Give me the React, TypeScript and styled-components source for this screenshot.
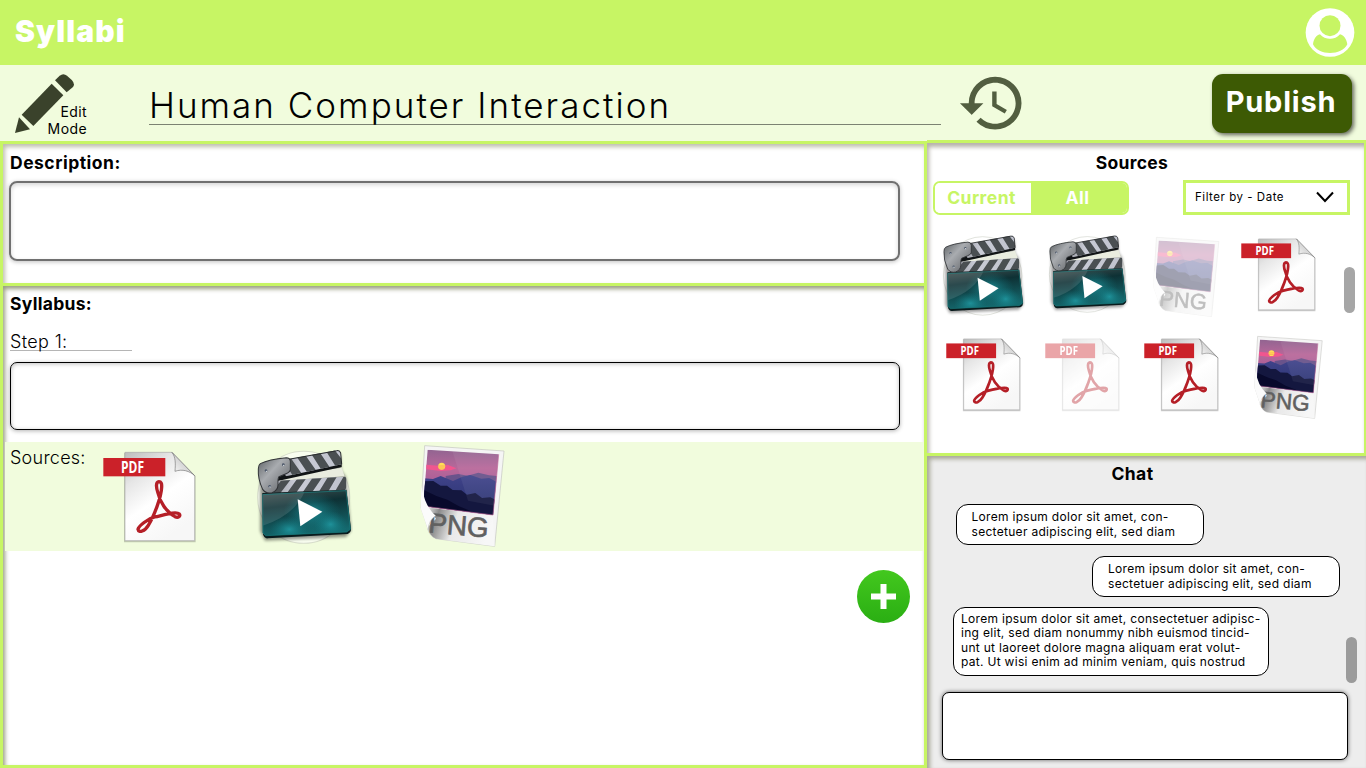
import React from "react";
import styled, { createGlobalStyle } from "styled-components";

const lime = "#c7f564";
const mint = "#f1fcdd";

const GlobalStyle = createGlobalStyle`
  * { box-sizing: border-box; }
  html, body { margin: 0; padding: 0; }
  body {
    width: 1366px;
    height: 768px;
    overflow: hidden;
    background: #fff;
    color: #000;
    font-family: Inter, "Liberation Sans", sans-serif;
  }
  svg { display: block; flex: none; }
`;

const Page = styled.div`
  display: flex;
  flex-direction: column;
  width: 1366px;
  height: 768px;
`;

const Header = styled.header`
  display: flex;
  justify-content: space-between;
  height: 65px;
  padding: 8px 11px 0 15px;
  background: ${lime};
`;

const Logo = styled.div`
  font-size: 30px;
  line-height: 36px;
  margin-top: 5px;
  font-weight: 900;
  letter-spacing: 1.1px;
  color: #fff;
`;

const Toolbar = styled.div`
  display: flex;
  align-items: flex-start;
  height: 76px;
  background: ${mint};
`;

const EditMode = styled.div`
  display: flex;
  width: 149px;
  padding: 8px 0 0 14px;
`;

const EditLabel = styled.div`
  width: 73px;
  margin: 30px 0 0 -61px;
  text-align: right;
  font-size: 14px;
  line-height: 17px;
  letter-spacing: 0.4px;
`;

const CourseTitle = styled.div`
  width: 792px;
  height: 60px;
  padding-top: 19px;
  border-bottom: 1px solid #7c8272;
  font-size: 35px;
  line-height: 42px;
  font-weight: 300;
  letter-spacing: 2.02px;
  white-space: nowrap;
`;

const HistoryButton = styled.div`
  margin: 3px 0 0 16px;
  width: 255px;
`;

const PublishButton = styled.button`
  width: 140px;
  height: 59px;
  margin: 9px 0 0 0;
  padding: 0 0 4px;
  border: 0;
  border-radius: 11px;
  background: #3d5a04;
  box-shadow: 2px 2px 4px rgba(0, 0, 0, 0.6);
  color: #fff;
  font: 700 29px/36px Inter, sans-serif;
  letter-spacing: 0.8px;
  text-indent: -2px;
`;

const Main = styled.main`
  display: grid;
  grid-template-columns: 927px 439px;
  height: 627px;
`;

const Column = styled.div`
  display: flex;
  flex-direction: column;
  height: 627px;
`;

const DescriptionPanel = styled.section`
  height: 145px;
  padding: 9px 0 0 6px;
  border: 3px solid ${lime};
  box-shadow: inset 2px 3px 4px rgba(70, 70, 20, 0.35);
`;

const SyllabusPanel = styled.section`
  position: relative;
  flex: 1;
  border: 3px solid ${lime};
  border-top: 0;
  box-shadow: inset 2px 3px 4px rgba(50, 60, 0, 0.5);
`;

const Heading = styled.h2<{ $spacing?: number; $indent?: number }>`
  margin: 0;
  padding-left: ${(p) => p.$indent ?? 0}px;
  font-size: 17.5px;
  line-height: 20px;
  font-weight: 700;
  letter-spacing: ${(p) => p.$spacing ?? 0.2}px;
`;

const DescriptionField = styled.div`
  width: 891px;
  height: 80px;
  margin-top: 8px;
  border: 2px solid #707070;
  border-radius: 8px;
  box-shadow: 0 1px 4px rgba(0, 0, 0, 0.25), inset 0 2px 4px rgba(0, 0, 0, 0.16);
`;

const StepName = styled.div`
  width: 122px;
  height: 20px;
  margin: 17px 0 11px 7px;
  border-bottom: 1px solid #b5b5b5;
  font-size: 18px;
  line-height: 22px;
  font-weight: 300;
  letter-spacing: 0.35px;
`;

const StepField = styled.div`
  width: 890px;
  height: 68px;
  margin-left: 7px;
  border: 1px solid #000;
  border-radius: 7px;
  box-shadow: 0 1px 4px rgba(0, 0, 0, 0.3), inset 0 1px 4px rgba(0, 0, 0, 0.25);
`;

const SyllabusTitle = styled.div`
  padding: 8px 0 0 7px;
`;

const StepSources = styled.div`
  display: flex;
  align-items: flex-start;
  height: 109px;
  margin: 12px 0 0 2px;
  background: ${mint};
`;

const SourcesLabel = styled.div`
  width: 98px;
  padding: 5px 0 0 5px;
  font-size: 18px;
  line-height: 22px;
  font-weight: 300;
  letter-spacing: 0.25px;
`;

const SourceItem = styled.div<{ $left?: number; $top?: number; $faded?: boolean }>`
  flex: none;
  margin-left: ${(p) => p.$left ?? 0}px;
  margin-top: ${(p) => p.$top ?? 0}px;
  opacity: ${(p) => (p.$faded ? 0.4 : 1)};
`;

const AddRow = styled.div`
  display: flex;
  justify-content: flex-end;
  padding: 19px 14px 0 0;
`;

const SourcesPanel = styled.section`
  position: relative;
  height: 316px;
  margin-top: -1px;
  border: 3px solid ${lime};
  border-left: 0;
  border-right-width: 2px;
  box-shadow: inset 2px 4px 4px rgba(60, 50, 30, 0.38);
`;

const CenteredTitle = styled.div<{ $top: number; $right?: number }>`
  padding: ${(p) => p.$top}px ${(p) => p.$right ?? 27}px 0 0;
  text-align: center;
`;

const Controls = styled.div`
  display: flex;
  justify-content: space-between;
  padding: 7px 14px 0 6px;
`;

const Tabs = styled.div`
  display: flex;
  width: 196px;
  height: 34px;
  margin-top: 1px;
  border: 2px solid ${lime};
  border-radius: 7px;
  overflow: hidden;
`;

const Tab = styled.div<{ $active?: boolean }>`
  width: 96px;
  flex: none;
  padding-right: 3px;
  text-align: center;
  font-size: 17.5px;
  line-height: 30px;
  font-weight: 700;
  letter-spacing: 0.45px;
  color: ${(p) => (p.$active ? "#fff" : lime)};
  background: ${(p) => (p.$active ? lime : "#fff")};
`;

const Filter = styled.div`
  display: flex;
  align-items: center;
  justify-content: space-between;
  width: 167px;
  height: 35px;
  padding: 0 13px 1px 9px;
  border: 3px solid ${lime};
  font-size: 11.5px;
  letter-spacing: 0.53px;
`;

const SourceRow = styled.div<{ $top: number }>`
  display: flex;
  align-items: flex-start;
  height: 100px;
  margin-top: ${(p) => p.$top}px;
`;

const ScrollThumb = styled.div<{ $top: number; $right: number; $color: string }>`
  position: absolute;
  top: ${(p) => p.$top}px;
  right: ${(p) => p.$right}px;
  width: 11px;
  height: 46px;
  border-radius: 6px;
  background: ${(p) => p.$color};
`;

const ChatPanel = styled.section`
  position: relative;
  flex: 1;
  background: #ededed;
  box-shadow: inset 3px 3px 4px rgba(70, 70, 30, 0.42);
`;

const Messages = styled.div`
  display: flex;
  flex-direction: column;
  height: 188px;
  margin-top: 20px;
`;

const Bubble = styled.div<{ $left: number; $w: number; $h: number; $pad: string; $line: number; $gap?: number }>`
  width: ${(p) => p.$w}px;
  height: ${(p) => p.$h}px;
  margin: ${(p) => p.$gap ?? 0}px 0 0 ${(p) => p.$left}px;
  padding: ${(p) => p.$pad};
  border: 1px solid #000;
  border-radius: 12px;
  background: #fff;
  font-size: 12px;
  line-height: ${(p) => p.$line}px;
  letter-spacing: 0.3px;
  white-space: nowrap;
`;

const ChatInput = styled.div`
  width: 406px;
  height: 68px;
  margin-left: 15px;
  border: 1px solid #000;
  border-radius: 7px;
  background: #fff;
  box-shadow: 0 0 4px rgba(0, 0, 0, 0.6);
`;

const Avatar = () => (
  <svg width="50" height="50" viewBox="0 0 150 150">
    <circle cx="75" cy="73.5" r="73" fill="#fff" />
    <path d="M24 109C26 94 33 82 45 79C60 97 90 97 105 79C117 82 125 94 127 109C111 144 39 144 24 109Z" fill={lime} />
    <circle cx="75" cy="53" r="38" fill="#fff" />
    <circle cx="75" cy="53" r="31.5" fill={lime} />
  </svg>
);

const Pencil = () => (
  <svg width="61" height="61" viewBox="42 219 183 183" fill="#3a422b">
    <path d="M155 251L190 286L100 378L65 344Z" />
    <path d="M165 241L179 227Q190 218 201 227L216 241Q226 252 219 261L200 277Z" />
    <path d="M57 352L90 388L45 399Z" />
  </svg>
);

const History = () => (
  <svg width="70.4" height="70.4" viewBox="0 0 24 24" fill="#525e40">
    <path d="M13 3a9 9 0 0 0-9 9H1l3.89 3.89.07.14L9 12H6c0-3.87 3.13-7 7-7s7 3.13 7 7-3.13 7-7 7c-1.93 0-3.68-.79-4.94-2.06l-1.42 1.42A8.954 8.954 0 0 0 13 21a9 9 0 0 0 0-18zm-1 5v5l4.28 2.54.72-1.21-3.5-2.08V8H12z" />
  </svg>
);

const Chevron = () => (
  <svg width="18" height="12" viewBox="0 0 18 12" fill="none" stroke="#000" strokeWidth="2">
    <path d="M1 1.5L9 10L17 1.5" />
  </svg>
);

const AddIcon = () => (
  <svg width="53" height="53" viewBox="0 0 53 53">
    <defs>
      <linearGradient id="add" x1="0" y1="0" x2="0" y2="1">
        <stop offset="0" stopColor="#43c81e" />
        <stop offset="1" stopColor="#2aae13" />
      </linearGradient>
    </defs>
    <circle cx="26.5" cy="26.5" r="26.5" fill="url(#add)" />
    <path d="M23.5 14H29.5V23.5H39V29.5H29.5V39H23.5V29.5H14V23.5H23.5Z" fill="#fff" />
  </svg>
);

const PdfIcon = ({ size = 93.3 }: { size?: number }) => {
  const id = React.useId();
  return (
    <svg width={size} height={size} viewBox="39 30 280 280">
      <defs>
        <linearGradient id={id + "p"} x1="0" y1="0" x2="0.55" y2="1">
          <stop offset="0" stopColor="#bcbcbc" />
          <stop offset="0.3" stopColor="#e6e6e6" />
          <stop offset="0.6" stopColor="#fff" />
          <stop offset="1" stopColor="#f7f7f7" />
        </linearGradient>
        <linearGradient id={id + "f"} x1="0" y1="1" x2="1" y2="0">
          <stop offset="0" stopColor="#fff" />
          <stop offset="0.5" stopColor="#d5d5d5" />
          <stop offset="1" stopColor="#8b8b8b" />
        </linearGradient>
      </defs>
      <path d="M102 38H247L317 109V307H102Z" fill="#000" opacity="0.2" />
      <path d="M105 37H246L314 107V302H105Z" fill={`url(#${id}p)`} stroke="#aaa" strokeWidth="2" />
      <path d="M246 37C257 51 257 71 255 94C277 86 299 93 314 107Z" fill={`url(#${id}f)`} stroke="#777" strokeWidth="2" />
      <rect x="40" y="54" width="186" height="55" fill="#cb2129" />
      <text x="93" y="98" fill="#fff" fontFamily="Open Sans, sans-serif" fontWeight="700" fontSize="47" textLength="69" lengthAdjust="spacingAndGlyphs">PDF</text>
      <path
        d="M207 125C197 126 198 142 204 159C209 184 229 216 255 230C265 235 273 228 268 222C259 213 222 225 194 231C174 236 146 258 144 268C146 281 165 273 175 256C192 229 214 171 215 142C216 130 213 125 207 125Z"
        fill="none"
        stroke="#b51f27"
        strokeWidth="10"
        strokeLinejoin="round"
      />
    </svg>
  );
};

const MovieIcon = ({ size = 96.7 }: { size?: number }) => {
  const id = React.useId();
  return (
    <svg width={size} height={(size * 295) / 290} viewBox="500 20 290 295">
      <defs>
        <linearGradient id={id + "b"} x1="0" y1="0" x2="0.25" y2="1">
          <stop offset="0" stopColor="#4a5453" />
          <stop offset="0.4" stopColor="#0e3135" />
          <stop offset="1" stopColor="#14696e" />
        </linearGradient>
        <radialGradient id={id + "g"}>
          <stop offset="0" stopColor="#23a6b0" stopOpacity="0.7" />
          <stop offset="1" stopColor="#118088" stopOpacity="0" />
        </radialGradient>
        <linearGradient id={id + "m"} x1="0" y1="0" x2="1" y2="1">
          <stop offset="0" stopColor="#5d6164" />
          <stop offset="0.4" stopColor="#a9acb0" />
          <stop offset="1" stopColor="#55585c" />
        </linearGradient>
        <linearGradient id={id + "s"} x1="0" y1="0" x2="1" y2="0">
          <stop offset="0" stopColor="#85878d" />
          <stop offset="0.4" stopColor="#c9cbd6" />
          <stop offset="1" stopColor="#bfc2cd" />
        </linearGradient>
        <clipPath id={id + "t"}><path d="M565 63L742 30Q751 29 754 38L757 72L590 108Z" /></clipPath>
        <clipPath id={id + "l"}><path d="M558 122L766 109Q771 110 771 116V151L520 160L535 150Z" /></clipPath>
        <clipPath id={id + "c"}><path d="M519 161L771 149L784 267L772 275L529 286L520 278Z" /></clipPath>
        <filter id={id + "h"} x="-20%" y="-20%" width="140%" height="150%"><feGaussianBlur stdDeviation="5" /></filter>
      </defs>
      <circle cx="643" cy="171" r="138" fill="#fff" fillOpacity="0.55" stroke="#c4c8bd" strokeOpacity="0.6" strokeWidth="3" />
      <path d="M512 75L754 43L756 90L770 110L786 270L770 290L527 301L512 272Z" fill="#000" opacity="0.4" filter={`url(#${id}h)`} />
      <path d="M566 122L766 108L757 82L600 104Z" fill="#e9ecdf" />
      <path d="M570 100L757 62V80L565 122Z" fill="#111416" />
      <g clipPath={`url(#${id}t)`}>
        <path d="M550 20H765V130H550Z" fill={`url(#${id}s)`} />
        <path d="M578 52L602 50L640 104L612 109ZM620 46L646 42L682 93L655 98ZM664 38L690 34L724 85L697 90ZM708 29L732 24L770 73L740 80Z" fill="#4a4f52" />
      </g>
      <path d="M569 62L742 31Q751 29 754 38L757 72" fill="none" stroke="#292c2e" strokeWidth="3" />
      <g clipPath={`url(#${id}l)`}>
        <path d="M510 100H780V170H510Z" fill={`url(#${id}s)`} />
        <path d="M540 165L582 112H608L568 165ZM588 165L628 109H654L615 165ZM634 165L674 106H702L662 165ZM682 165L720 103H746L710 165ZM730 165L765 105H792L758 165Z" fill="#4a4f52" />
      </g>
      <path d="M519 158L771 148L785 265Q786 276 775 281L535 294Q525 295 521 282Z" fill="#091b1d" />
      <g clipPath={`url(#${id}c)`}>
        <path d="M510 145H790V290H510Z" fill={`url(#${id}b)`} />
        <ellipse cx="668" cy="214" rx="85" ry="60" fill={`url(#${id}g)`} />
        <ellipse cx="600" cy="267" rx="58" ry="39" fill={`url(#${id}g)`} />
        <ellipse cx="724" cy="252" rx="50" ry="40" fill={`url(#${id}g)`} />
        <path d="M520 155L648 150Q616 226 520 256Z" fill="#fff" opacity="0.12" />
      </g>
      <path d="M520 163L770 151L783 267L772 275L529 286L521 278Z" fill="none" stroke="#1a7f80" strokeWidth="2" />
      <path d="M513 70Q538 57 591 52Q602 52 603 63V88Q602 96 590 100L569 109Q565 112 566 133Q566 150 548 157Q530 161 520 147Q505 115 507 85Q507 74 513 70Z" fill={`url(#${id}m)`} stroke="#303336" strokeWidth="3" />
      {[[530, 91], [582, 73], [541, 138]].map(([x, y]) => (
        <g key={x}>
          <circle cx={x} cy={y} r="4" fill="#4b5668" />
          <circle cx={x + 1} cy={y + 2} r="2" fill="#e7edf2" />
        </g>
      ))}
      <path d="M625 177L699 214L633 258Z" fill="#fff" />
    </svg>
  );
};

const PngIcon = ({ size = 86.7 }: { size?: number }) => {
  const id = React.useId();
  return (
    <svg width={size} height={(size * 310) / 260} viewBox="60 25 260 310">
      <defs>
        <linearGradient id={id + "s"} x1="0" y1="0" x2="0" y2="1">
          <stop offset="0" stopColor="#8d6490" />
          <stop offset="0.3" stopColor="#b8689a" />
          <stop offset="0.6" stopColor="#a45a95" />
        </linearGradient>
        <linearGradient id={id + "m"} x1="0" y1="0" x2="0" y2="1">
          <stop offset="0" stopColor="#40438a" />
          <stop offset="1" stopColor="#25306b" />
        </linearGradient>
        <linearGradient id={id + "c"} x1="0" y1="0" x2="1" y2="0.2">
          <stop offset="0" stopColor="#f2f2f2" />
          <stop offset="0.2" stopColor="#8a8a8a" />
          <stop offset="0.48" stopColor="#e9e9e9" />
          <stop offset="1" stopColor="#f7f7f7" />
        </linearGradient>
        <clipPath id={id + "p"}><path d="M86 42L299 56L282 238L78 212L75 180Z" /></clipPath>
      </defs>
      <path d="M77 30L315 46L287 332L111 309Q88 299 86 276L66 216Z" fill="#f5f5f5" stroke="#c3c4c0" strokeWidth="2" />
      <path d="M81 215L281 239L287 332L111 309Q90 301 87 274L111 249Z" fill={`url(#${id}c)`} />
      <g clipPath={`url(#${id}p)`}>
        <path d="M70 35H305V245H70Z" fill={`url(#${id}s)`} />
        <path d="M80 87L118 90L147 88L172 98L155 104L125 106L82 101Z" fill="#f0568f" />
        <circle cx="128" cy="92" r="10.5" fill="#ffdf55" />
        <path d="M116 91H140M119 97H137" stroke="#f79557" strokeWidth="2" />
        <path d="M140 121L178 115L206 120L238 111L270 119L301 122V145H140Z" fill="#69538b" />
        <path d="M75 128L102 130L125 121L162 136L190 123L214 118L247 129L271 127L300 143V245H70Z" fill={`url(#${id}m)`} />
        <path d="M73 137L103 136L125 150L144 150L161 163L187 164L204 177L229 172L249 187L274 185L295 195V240H73Z" fill="#14173f" />
        <path d="M76 164L112 181L145 192L180 212L220 228L76 218Z" fill="#08092b" />
        <path d="M158 40L300 50L287 210L207 195Z" fill="#fff" opacity="0.06" />
      </g>
      <path d="M299 56L282 238L78 212" fill="none" stroke="#c06a98" strokeWidth="2" />
      <g transform="translate(86 290) rotate(5)">
        <text x="0" y="0" fill="#606060" stroke="#606060" strokeWidth="2" fontFamily="Liberation Sans, sans-serif" fontSize="83" textLength="181" lengthAdjust="spacingAndGlyphs">PNG</text>
      </g>
      <path d="M67 150Q78 214 110 240Q90 252 87 282L65 218Z" fill="#fbfbfb" />
      <path d="M110 240Q90 252 87 282" fill="none" stroke="#aaa" strokeWidth="1.5" />
    </svg>
  );
};

export default function App() {
  return (
    <Page>
      <GlobalStyle />
      <Header>
        <Logo>Syllabi</Logo>
        <Avatar />
      </Header>
      <Toolbar>
        <EditMode>
          <Pencil />
          <EditLabel>Edit<br />Mode</EditLabel>
        </EditMode>
        <CourseTitle>Human Computer Interaction</CourseTitle>
        <HistoryButton><History /></HistoryButton>
        <PublishButton>Publish</PublishButton>
      </Toolbar>
      <Main>
        <Column>
          <DescriptionPanel>
            <Heading $spacing={0.5} $indent={1}>Description:</Heading>
            <DescriptionField />
          </DescriptionPanel>
          <SyllabusPanel>
            <SyllabusTitle><Heading $spacing={0.3}>Syllabus:</Heading></SyllabusTitle>
            <StepName>Step 1:</StepName>
            <StepField />
            <StepSources>
              <SourcesLabel>Sources:</SourcesLabel>
              <SourceItem $top={8}><PdfIcon /></SourceItem>
              <SourceItem $left={59.7} $top={4.7}><MovieIcon /></SourceItem>
              <SourceItem $left={66.6} $top={2.3}><PngIcon /></SourceItem>
            </StepSources>
            <AddRow><AddIcon /></AddRow>
          </SyllabusPanel>
        </Column>
        <Column>
          <SourcesPanel>
            <CenteredTitle $top={10}><Heading $spacing={0.3}>Sources</Heading></CenteredTitle>
            <Controls>
              <Tabs>
                <Tab>Current</Tab>
                <Tab $active>All</Tab>
              </Tabs>
              <Filter>
                <span>Filter by - Date</span>
                <Chevron />
              </Filter>
            </Controls>
            <SourceRow $top={17}>
              <SourceItem $left={15} $top={0.8}><MovieIcon size={82.5} /></SourceItem>
              <SourceItem $left={23.7} $top={1}><MovieIcon size={79.6} /></SourceItem>
              <SourceItem $left={24.4} $top={4} $faded><PngIcon size={68.2} /></SourceItem>
              <SourceItem $left={21} $top={5}><PdfIcon size={75} /></SourceItem>
            </SourceRow>
            <SourceRow $top={0}>
              <SourceItem $left={18.6} $top={5}><PdfIcon size={75} /></SourceItem>
              <SourceItem $left={24} $top={5} $faded><PdfIcon size={75} /></SourceItem>
              <SourceItem $left={24} $top={5}><PdfIcon size={75} /></SourceItem>
              <SourceItem $left={34.7} $top={2.6}><PngIcon size={70.6} /></SourceItem>
            </SourceRow>
            <ScrollThumb $top={124} $right={9} $color="#a6a6a6" />
          </SourcesPanel>
          <ChatPanel>
            <CenteredTitle $top={8} $right={28}><Heading $spacing={0.4}>Chat</Heading></CenteredTitle>
            <Messages>
              <Bubble $left={29} $w={248} $h={41} $pad="4px 0 0 14.5px" $line={15}>
                Lorem ipsum dolor sit amet, con-<br />sectetuer adipiscing elit, sed diam
              </Bubble>
              <Bubble $left={165} $w={248} $h={41} $pad="4px 0 0 15px" $line={15} $gap={11}>
                Lorem ipsum dolor sit amet, con-<br />sectetuer adipiscing elit, sed diam
              </Bubble>
              <Bubble $left={26} $w={316} $h={69} $pad="4px 0 0 7px" $line={14.4} $gap={10}>
                Lorem ipsum dolor sit amet, consectetuer adipisc-<br />
                ing elit, sed diam nonummy nibh euismod tincid-<br />
                unt ut laoreet dolore magna aliquam erat volut-<br />
                pat. Ut wisi enim ad minim veniam, quis nostrud
              </Bubble>
            </Messages>
            <ChatInput />
            <ScrollThumb $top={181} $right={9} $color="#9b9b9b" />
          </ChatPanel>
        </Column>
      </Main>
    </Page>
  );
}
